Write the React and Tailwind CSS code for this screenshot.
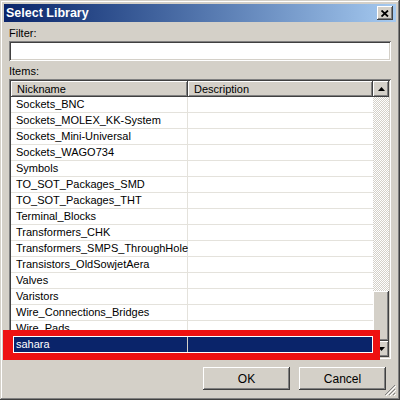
import React from "react"

const items = [
  "Sockets_BNC",
  "Sockets_MOLEX_KK-System",
  "Sockets_Mini-Universal",
  "Sockets_WAGO734",
  "Symbols",
  "TO_SOT_Packages_SMD",
  "TO_SOT_Packages_THT",
  "Terminal_Blocks",
  "Transformers_CHK",
  "Transformers_SMPS_ThroughHole",
  "Transistors_OldSowjetAera",
  "Valves",
  "Varistors",
  "Wire_Connections_Bridges",
  "Wire_Pads",
  "sahara",
]

const raised =
  "shadow-[inset_-1px_-1px_#404040,inset_1px_1px_#ffffff,inset_-2px_-2px_#808080,inset_2px_2px_#d4d0c8]"
const sunken =
  "shadow-[inset_1px_1px_#808080,inset_-1px_-1px_#ffffff,inset_2px_2px_#404040,inset_-2px_-2px_#d4d0c8]"

function Arrow({ down }) {
  return (
    <svg width="7" height="4" viewBox="0 0 7 4">
      {down ? (
        <polygon points="0,0 7,0 3.5,4" fill="#000" />
      ) : (
        <polygon points="3.5,0 7,4 0,4" fill="#000" />
      )}
    </svg>
  )
}

export default function App() {
  return (
    <div
      className="relative w-[400px] h-[400px] bg-[#d4d0c8] p-[4px] flex flex-col text-[11px] text-black shadow-[inset_-1px_-1px_#404040,inset_1px_1px_#d4d0c8,inset_-2px_-2px_#808080,inset_2px_2px_#ffffff]"
      style={{ fontFamily: '"Liberation Sans", Arial, sans-serif' }}
    >
      {/* title bar */}
      <div className="h-[18px] shrink-0 flex items-center justify-between bg-gradient-to-r from-[#0a246a] to-[#a6caf0] pl-[2px] pr-[3px]">
        <span className="text-white font-bold text-[12.5px] leading-[18px]">Select Library</span>
        <div className={`w-[16px] h-[14px] bg-[#d4d0c8] flex items-center justify-center ${raised}`}>
          <svg width="8" height="7" viewBox="0 0 8 7">
            <path d="M0.5 0.5 L7 6.5 M7 0.5 L0.5 6.5" stroke="#000" strokeWidth="1.8" />
          </svg>
        </div>
      </div>

      <div className="flex flex-col px-[5px]">
        <div className="mt-[4px] h-[14px] leading-[14px]">Filter:</div>
        <div className={`mt-[1px] h-[20px] bg-white ${sunken}`} />
        <div className="mt-[3px] h-[14px] leading-[14px]">Items:</div>

        {/* list */}
        <div className={`mt-[1px] h-[280px] bg-white p-[2px] flex ${sunken}`}>
          <div className="flex-1 flex flex-col overflow-hidden">
            <div className="h-[16px] shrink-0 flex">
              <div className={`w-[177px] bg-[#d4d0c8] pl-[6px] leading-[16px] ${raised}`}>Nickname</div>
              <div className={`flex-1 bg-[#d4d0c8] pl-[6px] leading-[16px] ${raised}`}>Description</div>
            </div>
            {items.map((name) => {
              const sel = name === "sahara"
              return (
                <div
                  key={name}
                  className={`h-[16px] shrink-0 flex border-b ${sel ? "bg-[#0a246a] text-white border-[#0a246a]" : "border-[#e4e2dc]"}`}
                >
                  <div className={`w-[177px] pl-[5px] leading-[15px] border-r ${sel ? "border-[#d4d0c8]" : "border-[#e4e2dc]"}`}>
                    {name}
                  </div>
                  <div className="flex-1" />
                </div>
              )
            })}
          </div>

          {/* scrollbar */}
          <div className="w-[16px] flex flex-col">
            <div className={`h-[16px] bg-[#d4d0c8] flex items-center justify-center ${raised}`}>
              <Arrow />
            </div>
            <div className="flex-1 bg-[image:repeating-conic-gradient(#d4d0c8_0%_25%,#ffffff_0%_50%)] bg-[size:2px_2px]" />
            <div className={`h-[50px] bg-[#d4d0c8] ${raised}`} />
            <div className={`h-[16px] bg-[#d4d0c8] flex items-center justify-center ${raised}`}>
              <Arrow down />
            </div>
          </div>
        </div>

        {/* buttons */}
        <div className="mt-[8px] h-[23px] flex justify-end gap-[9px] pr-[5px]">
          <div className={`w-[87px] bg-[#d4d0c8] flex items-center justify-center text-[12px] ${raised}`}>OK</div>
          <div className={`w-[87px] bg-[#d4d0c8] flex items-center justify-center text-[12px] ${raised}`}>Cancel</div>
        </div>
      </div>

      {/* size grip */}
      <svg className="absolute right-[4px] bottom-[4px]" width="12" height="12" viewBox="0 0 12 12">
        <path d="M11 1 L1 11 M11 5 L5 11 M11 9 L9 11" stroke="#808080" strokeWidth="1" />
        <path d="M12 2 L2 12 M12 6 L6 12 M12 10 L10 12" stroke="#ffffff" strokeWidth="1" />
      </svg>

      {/* red annotation box */}
      <div className="absolute left-[3px] top-[330px] w-[377px] h-[30px] border-t-[6px] border-b-[7px] border-l-[10px] border-r-[7px] border-[#ee1111] shadow-[inset_0_0_0_1px_#ffffff]" />
    </div>
  )
}
